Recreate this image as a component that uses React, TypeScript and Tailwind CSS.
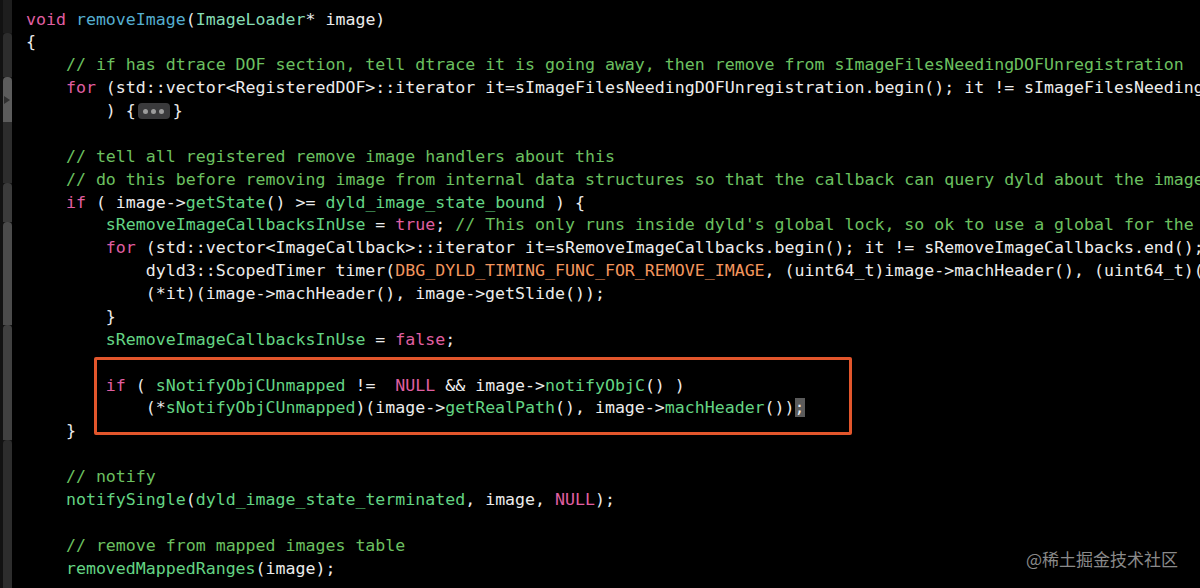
import React from 'react';

type Kind = 'p' | 'k' | 'c' | 'f' | 'd' | 't' | 'm' | 'sel';
type Tok = [string, Kind];

const color: Record<Kind, string> = {
  p: 'text-[#ececec]',
  k: 'text-[#e05fa2]',
  c: 'text-[#6cc060]',
  f: 'text-[#64d484]',
  d: 'text-[#55aed0]',
  t: 'text-[#86dcb5]',
  m: 'text-[#f3955d]',
  sel: 'text-[#ececec] bg-[#5b5b5b]',
};

const lines: (Tok[] | 'fold')[] = [
  [['void', 'k'], [' ', 'p'], ['removeImage', 'd'], ['(', 'p'], ['ImageLoader', 't'], ['* image)', 'p']],
  [['{', 'p']],
  [['    ', 'p'], ['// if has dtrace DOF section, tell dtrace it is going away, then remove from sImageFilesNeedingDOFUnregistration', 'c']],
  [['    ', 'p'], ['for', 'k'], [' (std::vector<RegisteredDOF>::iterator it=sImageFilesNeedingDOFUnregistration.begin(); it != sImageFilesNeedingDOFUnregistration.end(); ', 'p']],
  'fold',
  [],
  [['    ', 'p'], ['// tell all registered remove image handlers about this', 'c']],
  [['    ', 'p'], ['// do this before removing image from internal data structures so that the callback can query dyld about the image and call dlopen()', 'c']],
  [['    ', 'p'], ['if', 'k'], [' ( image->', 'p'], ['getState', 'f'], ['() >= ', 'p'], ['dyld_image_state_bound', 'f'], [' ) {', 'p']],
  [['        ', 'p'], ['sRemoveImageCallbacksInUse', 'f'], [' = ', 'p'], ['true', 'k'], ['; ', 'p'], ["// This only runs inside dyld's global lock, so ok to use a global for the in-use flag.", 'c']],
  [['        ', 'p'], ['for', 'k'], [' (std::vector<ImageCallback>::iterator it=sRemoveImageCallbacks.begin(); it != sRemoveImageCallbacks.end(); it++) {', 'p']],
  [['            dyld3::ScopedTimer timer(', 'p'], ['DBG_DYLD_TIMING_FUNC_FOR_REMOVE_IMAGE', 'm'], [', (uint64_t)image->machHeader(), (uint64_t)(*it), 0);', 'p']],
  [['            (*it)(image->machHeader(), image->getSlide());', 'p']],
  [['        }', 'p']],
  [['        ', 'p'], ['sRemoveImageCallbacksInUse', 'f'], [' = ', 'p'], ['false', 'k'], [';', 'p']],
  [],
  [['        ', 'p'], ['if', 'k'], [' ( ', 'p'], ['sNotifyObjCUnmapped', 'f'], [' !=  ', 'p'], ['NULL', 'k'], [' && image->', 'p'], ['notifyObjC', 'f'], ['() )', 'p']],
  [['            (*', 'p'], ['sNotifyObjCUnmapped', 'f'], [')(image->', 'p'], ['getRealPath', 'f'], ['(), image->', 'p'], ['machHeader', 'f'], ['())', 'p'], [';', 'sel']],
  [['    }', 'p']],
  [],
  [['    ', 'p'], ['// notify', 'c']],
  [['    ', 'p'], ['notifySingle', 'f'], ['(', 'p'], ['dyld_image_state_terminated', 'f'], [', image, ', 'p'], ['NULL', 'k'], [');', 'p']],
  [],
  [['    ', 'p'], ['// remove from mapped images table', 'c']],
  [['    ', 'p'], ['removedMappedRanges', 'f'], ['(image);', 'p']],
];

const FoldRibbon = () => (
  <div className="w-[9px] shrink-0 h-full flex flex-col bg-[#141414]">
    <div className="h-[33px] bg-[#1e1e1e]" />
    <div className="h-[44px] bg-[#2d2d2d] rounded-t-[4px]" />
    <div className="h-[45px] bg-[#5c5c5c] rounded-t-[4px] flex items-center">
      <svg width="6" height="8" viewBox="0 0 6 8" className="ml-[1px]">
        <path d="M0 0 L6 4 L0 8 Z" fill="#303030" />
      </svg>
    </div>
    <div className="h-[61px] bg-[#2d2d2d]" />
    <div className="h-[39px] bg-[#3b3b3b] rounded-t-[4px]" />
    <div className="h-[103px] bg-[#4b4b4b] rounded-t-[4px]" />
    <div className="h-[115px] bg-[#404040] rounded-t-[4px]" />
    <div className="flex-1 bg-[#2d2d2d] rounded-t-[4px]" />
  </div>
);

const App = () => {
  return (
    <div className="relative w-[1200px] h-[588px] bg-black overflow-hidden flex">
      <div className="w-[3px] shrink-0 h-full bg-[#121212]" />
      <FoldRibbon />

      {/* code */}
      <div className="pl-[14px] pt-[8.5px] shrink-0 font-['DejaVu_Sans_Mono',monospace] text-[16.58px] leading-[22.875px] whitespace-pre">
        {lines.map((line, i) =>
          line === 'fold' ? (
            <div key={i} className="h-[22.875px] flex items-center text-[#ececec]">
              <span>{'        ) {'}</span>
              <span className="ml-[2px] w-[32px] h-[16px] rounded-[4px] bg-[#3a3a3c] flex items-center justify-center gap-[3px]">
                <span className="w-[5px] h-[5px] rounded-full bg-[#9c9c9c]" />
                <span className="w-[5px] h-[5px] rounded-full bg-[#9c9c9c]" />
                <span className="w-[5px] h-[5px] rounded-full bg-[#9c9c9c]" />
              </span>
              <span className="ml-[3px]">{'}'}</span>
            </div>
          ) : (
            <div key={i} className="h-[22.875px]">
              {line.map(([text, kind], j) => (
                <span key={j} className={color[kind]}>
                  {text}
                </span>
              ))}
            </div>
          )
        )}
      </div>

      {/* highlight box */}
      <div className="absolute left-[94px] top-[357px] w-[758px] h-[78px] border-[3px] border-[#e2562c] rounded-[2px]" />

      {/* watermark */}
      <div className="absolute right-[22px] top-[546px] text-[17px] text-[#8a8a8a] font-['Noto_Sans_CJK_SC',sans-serif]">
        @稀土掘金技术社区
      </div>
    </div>
  );
};

export default App;
